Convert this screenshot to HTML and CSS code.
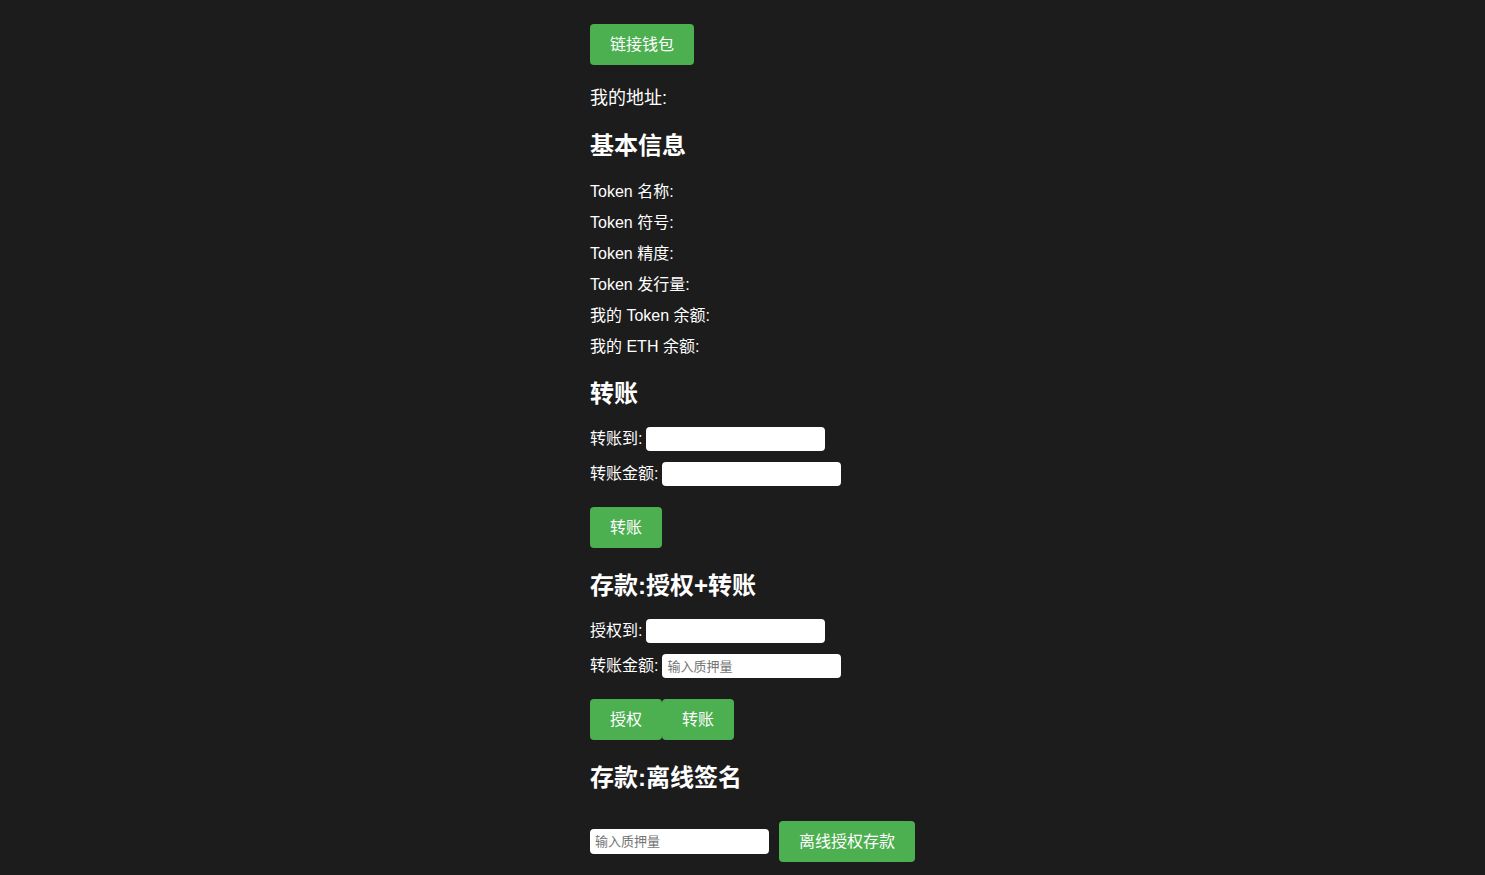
FILE: index.html
```html
<!DOCTYPE html>
<html lang="zh">
<head>
<meta charset="utf-8">
<title>Token</title>
<link rel="stylesheet" href="styles.css">
</head>
<body>
<div class="page">
  <button class="btn">链接钱包</button>
  <p class="address">我的地址:</p>

  <h2 class="title">基本信息</h2>
  <div class="info">
    <div class="line">Token 名称:</div>
    <div class="line">Token 符号:</div>
    <div class="line">Token 精度:</div>
    <div class="line">Token 发行量:</div>
    <div class="line">我的 Token 余额:</div>
    <div class="line">我的 ETH 余额:</div>
  </div>

  <h2 class="title">转账</h2>
  <div class="form">
    <label class="row">转账到: <input class="field" type="text"></label>
    <label class="row">转账金额: <input class="field" type="text"></label>
  </div>
  <div class="actions">
    <button class="btn">转账</button>
  </div>

  <h2 class="title">存款:授权+转账</h2>
  <div class="form">
    <label class="row">授权到: <input class="field" type="text"></label>
    <label class="row">转账金额: <input class="field" type="text" placeholder="输入质押量"></label>
  </div>
  <div class="actions">
    <button class="btn">授权</button><button class="btn">转账</button>
  </div>

  <h2 class="title">存款:离线签名</h2>
  <div class="offline">
    <input class="field" type="text" placeholder="输入质押量">
    <button class="btn">离线授权存款</button>
  </div>
</div>
</body>
</html>
```

FILE: styles.css
```css
html, body {
  margin: 0;
  padding: 0;
  background: #1c1c1c;
}
body {
  color: #ffffff;
  font-family: "Liberation Sans", "Noto Sans CJK SC", sans-serif;
  font-size: 16px;
}
.page {
  width: 305px;
  margin: 0 auto;
  padding: 24px 0 20px;
  display: flex;
  flex-direction: column;
  align-items: flex-start;
}
.btn {
  flex-shrink: 0;
  white-space: nowrap;
  background: #4caf50;
  color: #ffffff;
  border: none;
  border-radius: 4px;
  padding: 0 20px;
  height: 41px;
  font-family: "Liberation Sans", "Noto Sans CJK SC", sans-serif;
  font-size: 16px;
  line-height: 41px;
  cursor: pointer;
}
.address {
  margin: 21px 0 0;
  font-size: 18px;
  line-height: 24px;
}
.title {
  margin: 21px 0 0;
  font-size: 24px;
  line-height: 30px;
  font-weight: bold;
}
.info {
  margin-top: 20px;
  display: flex;
  flex-direction: column;
  gap: 9px;
}
.line {
  line-height: 22px;
}
.form {
  margin-top: 18px;
  display: flex;
  flex-direction: column;
  gap: 11px;
}
.row {
  display: flex;
  align-items: center;
  gap: 4px;
  height: 24px;
  line-height: 24px;
  white-space: nowrap;
}
.field {
  box-sizing: border-box;
  width: 179px;
  height: 24px;
  border: none;
  border-radius: 4px;
  background: #ffffff;
  padding: 0 5px;
  font-family: "Liberation Sans", "Noto Sans CJK SC", sans-serif;
  font-size: 13px;
  color: #333;
  outline: none;
}
.field::placeholder {
  color: #757575;
}
.actions {
  margin-top: 21px;
  margin-bottom: 2px;
  display: flex;
}
.offline {
  width: max-content;
  margin-top: 28px;
  display: flex;
  align-items: center;
  gap: 10px;
}
.offline .field {
  height: 25px;
}
```
